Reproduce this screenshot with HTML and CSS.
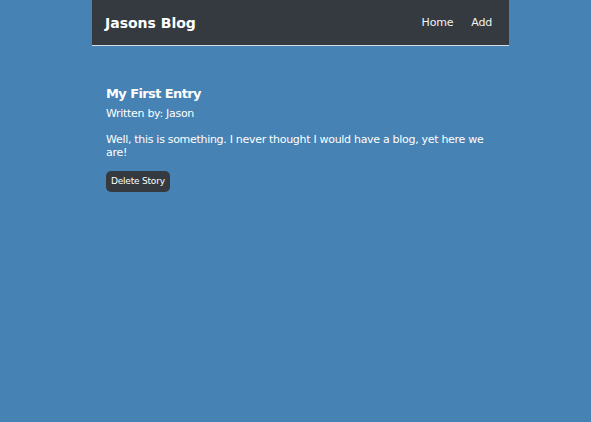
FILE: index.html
```html
<!DOCTYPE html>
<html>
<head>
<meta charset="utf-8">
<link rel="stylesheet" href="styles.css">
</head>
<body>
<div class="page">
  <header class="navbar">
    <span class="brand">Jasons Blog</span>
    <nav class="links">
      <a href="#" class="link">Home</a>
      <a href="#" class="link">Add</a>
    </nav>
  </header>
  <main class="content">
    <article class="story">
      <h2 class="story-title">My First Entry</h2>
      <div class="story-author">Written by: Jason</div>
      <p class="story-body">Well, this is something. I never thought I would have a blog, yet here we are!</p>
      <button class="delete-btn">Delete Story</button>
    </article>
  </main>
</div>
</body>
</html>
```
FILE: styles.css
```css
html, body {
  margin: 0;
  padding: 0;
  background: #4682b4;
  font-family: "DejaVu Sans", Verdana, sans-serif;
  color: #fff;
}
.page {
  width: 417px;
  margin-left: 92px;
}
.navbar {
  height: 45px;
  background: #343a40;
  border-bottom: 1px solid #d8dde2;
  display: flex;
  align-items: center;
  justify-content: space-between;
  padding: 0 17px 0 13px;
}
.brand {
  font-weight: bold;
  font-size: 14px;
  color: #fff;
}
.links {
  display: flex;
  gap: 18px;
}
.link {
  color: #f2f2f2;
  text-decoration: none;
  font-size: 11px;
  letter-spacing: -0.2px;
}
.content {
  padding: 40px 14px 0 14px;
}
.story-title {
  margin: 0;
  font-size: 13px;
  font-weight: bold;
  line-height: 16px;
  letter-spacing: -0.6px;
}
.story-author {
  margin-top: 5px;
  font-size: 11px;
  line-height: 14px;
  letter-spacing: -0.3px;
}
.story-body {
  margin: 12px 0 10px 0;
  font-size: 11px;
  line-height: 13px;
  letter-spacing: -0.3px;
}
.delete-btn {
  background: #343a40;
  color: #fff;
  border: none;
  border-radius: 5px;
  font-family: inherit;
  font-size: 9px;
  letter-spacing: -0.2px;
  height: 21px;
  padding: 0 5px;
}
```
